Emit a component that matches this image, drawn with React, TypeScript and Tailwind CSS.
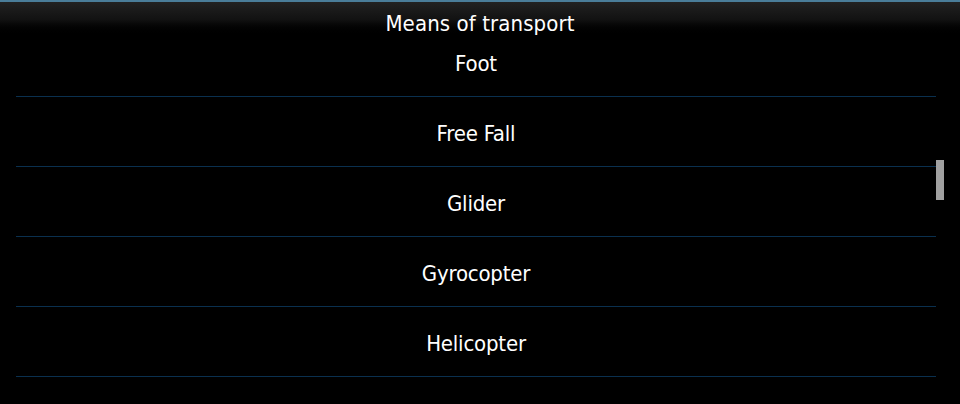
import React from 'react';

const items = ['Foot', 'Free Fall', 'Glider', 'Gyrocopter', 'Helicopter'];

const App: React.FC = () => {
  return (
    <div
      className="relative w-[960px] h-[404px] overflow-hidden bg-black text-white"
      style={{ fontFamily: '"DejaVu Sans Condensed", "DejaVu Sans", sans-serif' }}
    >
      {/* Title bar */}
      <div className="relative z-10 h-[37px] -mb-[10px] border-t-2 border-[#4a7d99] bg-gradient-to-b from-[#222222] via-[#121212] to-black">
        <h1 className="pt-[9px] text-center text-[22px] leading-[26px] tracking-[0.1px]">Means of transport</h1>
      </div>

      {/* List */}
      <div className="ml-4 mr-6">
        {items.map((name) => (
          <div key={name} className="flex h-[70px] flex-col">
            <div className="flex flex-1 items-center justify-center pt-[4px] text-[22px] tracking-[-0.2px]">
              {name}
            </div>
            <div className="h-px bg-[#0a304f]" />
          </div>
        ))}
      </div>

      {/* Scroll indicator */}
      <div className="absolute left-[936px] top-[160px] h-[40px] w-[8px] bg-[#a0a0a0]" />
    </div>
  );
};

export default App;
